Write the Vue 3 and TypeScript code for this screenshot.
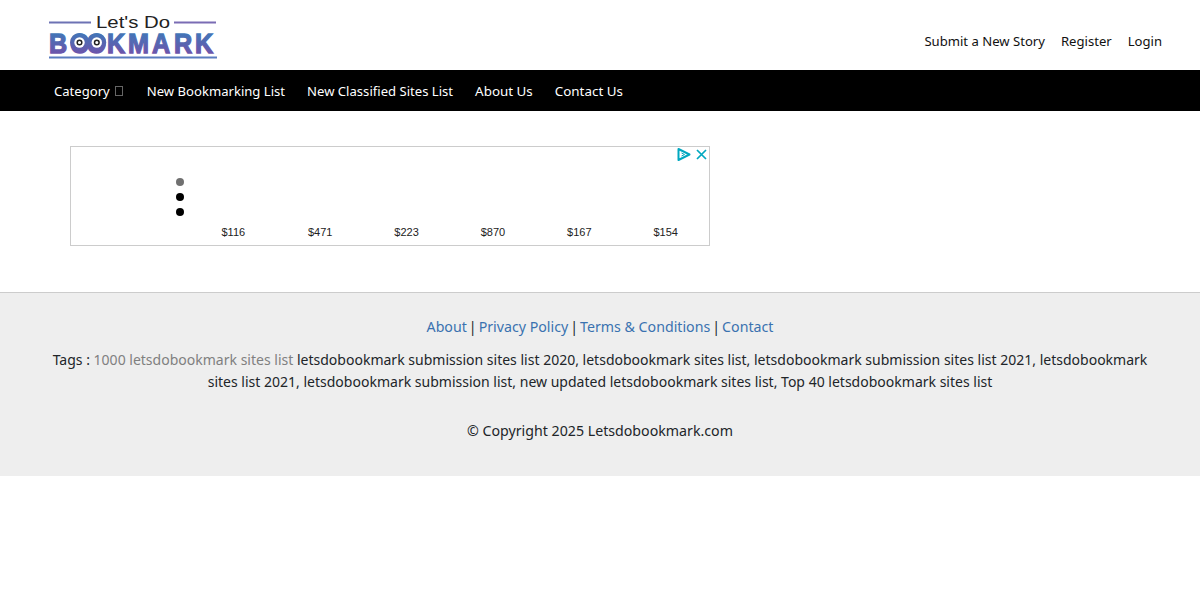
<script setup lang="ts">
const navLeft: string[] = ['New Bookmarking List', 'New Classified Sites List', 'About Us', 'Contact Us']
const prices: string[] = ['$116', '$471', '$223', '$870', '$167', '$154']
const links: string[] = ['About', 'Privacy Policy', 'Terms & Conditions', 'Contact']
const eyes: number[] = [30.5, 47.8]
</script>

<template>
  <div class="page">
    <header class="top">
      <svg class="logo" width="170" height="50" viewBox="0 0 170 50" aria-label="Let's Do Bookmark">
        <defs>
          <linearGradient id="lg" gradientUnits="userSpaceOnUse" x1="0" y1="18" x2="0" y2="39">
            <stop offset="0" stop-color="#3f78b8" />
            <stop offset="1" stop-color="#6b55ab" />
          </linearGradient>
        </defs>
        <rect x="0" y="7.5" width="42" height="2" fill="#6d72b4" />
        <rect x="125" y="7.5" width="42" height="2" fill="#7a6cb4" />
        <text x="47" y="13.5" class="lets" textLength="74" lengthAdjust="spacingAndGlyphs">Let's Do</text>
        <text
          transform="scale(.9 1)"
          x="0 23.3 41.7 64.4 87.8 114.4 138.9 162.2"
          y="38.6"
          class="mark"
          fill="url(#lg)"
          stroke="url(#lg)"
          stroke-width="1.3"
        >BOOKMARK</text>
        <g v-for="cx in eyes" :key="cx">
          <circle :cx="cx" cy="28.5" r="9.4" fill="url(#lg)" />
          <circle :cx="cx" cy="28.5" r="5.2" fill="#fff" />
          <circle :cx="cx" cy="28.5" r="2.3" fill="#fff" stroke="#222" stroke-width="1.5" />
        </g>
        <rect x="0" y="42.5" width="168" height="2" fill="#5a7cc0" />
      </svg>
      <nav class="user">
        <a>Submit a New Story</a>
        <a>Register</a>
        <a>Login</a>
      </nav>
    </header>

    <nav class="bar">
      <a class="cat">Category <span class="tofu"></span></a>
      <a v-for="n in navLeft" :key="n" class="item">{{ n }}</a>
    </nav>

    <main class="content">
      <div class="ad">
        <div class="ad-icons">
          <svg width="16" height="15" viewBox="0 0 16 15">
            <path d="M2.5 2 L13.5 7.5 L2.5 13 Z" fill="none" stroke="#00a8c0" stroke-width="2" stroke-linejoin="round" />
            <path d="M5.5 6 L8.5 7.5 L5.5 9" fill="none" stroke="#00a8c0" stroke-width="1" />
          </svg>
          <svg width="11" height="11" viewBox="0 0 11 11">
            <path d="M1 1 L10 10 M10 1 L1 10" stroke="#00a8c0" stroke-width="1.7" fill="none" />
          </svg>
        </div>
        <div class="dots">
          <span class="dot grey"></span>
          <span class="dot"></span>
          <span class="dot"></span>
        </div>
        <div class="prices">
          <span v-for="p in prices" :key="p">{{ p }}</span>
        </div>
      </div>
    </main>

    <footer class="foot">
      <p class="links">
        <template v-for="(l, i) in links" :key="l">
          <a>{{ l }}</a><span v-if="i < links.length - 1" class="sep">|</span>
        </template>
      </p>
      <p class="tags">
        Tags : <span class="muted">1000 letsdobookmark sites list</span> letsdobookmark submission sites list 2020, letsdobookmark sites list, letsdobookmark submission sites list 2021, letsdobookmark sites list 2021, letsdobookmark submission list, new updated letsdobookmark sites list, Top 40 letsdobookmark sites list
      </p>
      <p class="copy">© Copyright 2025 Letsdobookmark.com</p>
    </footer>
  </div>
</template>

<style>
html, body { background: #fff; }
</style>

<style scoped>
.page {
  font-family: "Noto Sans", "Open Sans", sans-serif;
  color: #212529;
  font-size: 13.1px;
}
.top {
  height: 70px;
  display: flex;
  justify-content: space-between;
  align-items: flex-start;
  padding: 0 38px 0 49px;
  box-sizing: border-box;
}
.logo { margin-top: 14px; display: block; }
.lets {
  font-family: "Liberation Sans", sans-serif;
  font-size: 17px;
  fill: #222;
}
.mark {
  font-family: "Liberation Sans", sans-serif;
  font-size: 28px;
  font-weight: 700;
}
.user {
  display: flex;
  gap: 16px;
  margin-top: 32px;
  color: #111;
  font-size: 13.1px;
}
.bar {
  height: 41px;
  background: #000;
  color: #fff;
  display: flex;
  align-items: center;
  gap: 22px;
  padding-left: 54px;
}
.cat { display: inline-flex; align-items: center; gap: 5px; margin-right: 2px; }
.item:nth-last-child(-n + 2) { font-size: 13.4px; }
.tofu {
  width: 6px;
  height: 8px;
  border: 1px solid #666;
  display: inline-block;
}
.content {
  height: 181px;
  padding: 35px 0 0 70px;
  box-sizing: border-box;
}
.ad {
  position: relative;
  width: 640px;
  height: 100px;
  box-sizing: border-box;
  border: 1px solid #ccc;
  font-family: "Liberation Sans", sans-serif;
  font-size: 11px;
  color: #222;
}
.ad-icons {
  position: absolute;
  top: 0;
  right: 2px;
  display: flex;
  align-items: center;
  gap: 4px;
}
.dots {
  position: absolute;
  left: 105px;
  top: 31px;
  display: flex;
  flex-direction: column;
  gap: 7px;
}
.dot {
  width: 8px;
  height: 8px;
  border-radius: 50%;
  background: #000;
}
.dot.grey { background: #707070; }
.prices {
  position: absolute;
  left: 150.5px;
  top: 79px;
  display: grid;
  grid-template-columns: repeat(6, 86.4px);
}
.foot {
  height: 184px;
  box-sizing: border-box;
  background: #eee;
  border-top: 1px solid #ccc;
  padding: 23px 45px 0;
  text-align: center;
  font-size: 14.2px;
  line-height: 22px;
}
.foot p { margin: 0; }
.links a { color: #3a72b0; }
.sep { margin: 0 2px; }
.tags { margin-top: 11px !important; font-size: 14.03px; }
.muted { color: #808080; }
.copy { margin-top: 27px !important; }
</style>
